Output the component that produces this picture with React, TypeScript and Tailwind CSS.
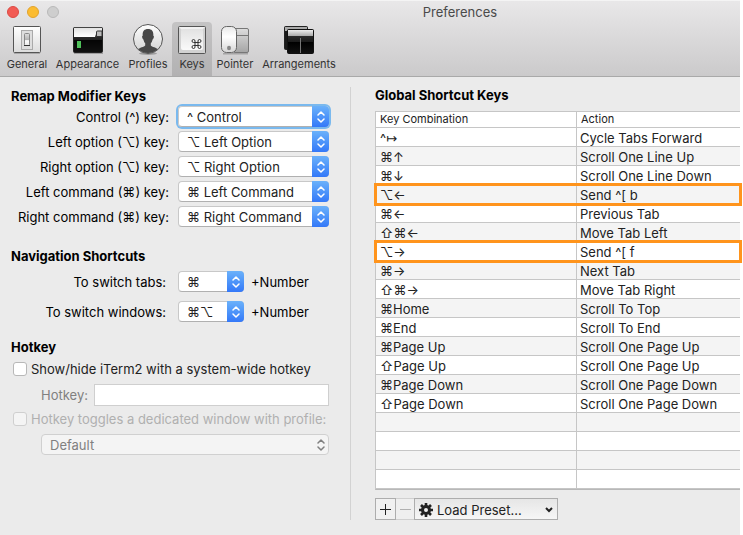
import { useState } from "react";
import type { ReactNode } from "react";

const FONT = "font-['Inter','Liberation_Sans','DejaVu_Sans',sans-serif]";

function GeneralIcon() {
  return (
    <svg width="32" height="32" viewBox="0 0 32 32" aria-hidden="true">
      <defs>
        <linearGradient id="gen" x1="0" y1="0" x2="0" y2="1">
          <stop offset="0" stopColor="#fff" />
          <stop offset="1" stopColor="#dcdcdc" />
        </linearGradient>
        <linearGradient id="knob" x1="0" y1="0" x2="0" y2="1">
          <stop offset="0" stopColor="#ddd" />
          <stop offset="0.5" stopColor="#b5b5b5" />
          <stop offset="0.6" stopColor="#fff" />
          <stop offset="1" stopColor="#e8e8e8" />
        </linearGradient>
      </defs>
      <rect x="3" y="29" width="26" height="1" fill="#000" opacity=".2" />
      <rect x="2.5" y="2.5" width="27" height="26" rx="1" fill="url(#gen)" stroke="#555" />
      <rect x="10.5" y="6.5" width="11" height="19" fill="#dedede" stroke="#aaa" />
      <rect x="13.5" y="9.5" width="5" height="12" rx="1" fill="url(#knob)" stroke="#888" />
      <path d="M13 21.5h6" stroke="#333" />
    </svg>
  );
}

function AppearanceIcon() {
  return (
    <svg width="32" height="32" viewBox="0 0 32 32" aria-hidden="true">
      <defs>
        <linearGradient id="appTop" x1="0" y1="0" x2="0" y2="1">
          <stop offset="0" stopColor="#e2e2e2" />
          <stop offset="1" stopColor="#fff" />
        </linearGradient>
        <linearGradient id="appBody" x1="0" y1="0" x2="0" y2="1">
          <stop offset="0" stopColor="#3e3e3e" />
          <stop offset="0.5" stopColor="#222" />
          <stop offset="0.52" stopColor="#050505" />
          <stop offset="1" stopColor="#111" />
        </linearGradient>
      </defs>
      <rect x="2" y="29" width="29" height="1" fill="#000" opacity=".25" />
      <rect x="1.5" y="3.5" width="29" height="25" rx="1" fill="url(#appBody)" stroke="#222" />
      <path d="M2 4h28v6h-6l-1 3H2z" fill="url(#appTop)" />
      <path d="M24.500 12.500V8q0-1 1-1H30v5.500z" fill="#bbb" stroke="#333" />
      <path d="M2 3.500h28" stroke="#444" />
      <rect x="5" y="17" width="4" height="7" fill="#4fc15a" />
    </svg>
  );
}

function ProfilesIcon() {
  return (
    <svg width="32" height="32" viewBox="0 0 32 32" aria-hidden="true">
      <defs>
        <linearGradient id="prof" x1="0" y1="0" x2="0" y2="1">
          <stop offset="0" stopColor="#fff" />
          <stop offset="1" stopColor="#d0d0d0" />
        </linearGradient>
        <clipPath id="profClip">
          <circle cx="16" cy="15" r="14" />
        </clipPath>
      </defs>
      <ellipse cx="16" cy="29.500" rx="9" ry="1.500" fill="#000" opacity=".25" />
      <circle cx="16" cy="15" r="14.500" fill="url(#prof)" stroke="#555" />
      <path
        clipPath="url(#profClip)"
        d="M16 5c-4 0-5.600 2.600-5.300 6 .1 1-.8.900-.6 2 .2 1.300.6 2 1.300 2.400.4 2 1.200 3.100 1.800 3.800v2.300c-.9 1.700-5.600 1.800-8.200 4.500V31h22v-5c-2.600-2.700-7.300-2.800-8.200-4.500v-2.300c.6-.7 1.400-1.800 1.800-3.800.7-.4 1.100-1.100 1.300-2.400.2-1.100-.7-1-.6-2C21.600 7.600 20 5 16 5z"
        fill="#484848"
      />
    </svg>
  );
}

function KeysIcon() {
  return (
    <svg width="32" height="32" viewBox="0 0 32 32" aria-hidden="true">
      <defs>
        <linearGradient id="keyFace" x1="0" y1="0" x2="0" y2="1">
          <stop offset="0" stopColor="#e2e2e2" />
          <stop offset="1" stopColor="#fafafa" />
        </linearGradient>
      </defs>
      <rect x="2.500" y="2.500" width="27" height="27" rx="1" fill="#d2d2d2" stroke="#555" />
      <path d="M3 3h26l-3 3H6z" fill="#f2f2f2" />
      <rect x="5" y="5" width="22" height="21" rx="2" fill="url(#keyFace)" />
      <path
        d="M19 18.500v-1.500a1.500 1.500 0 1 0-1.500 1.500h6a1.500 1.500 0 1 0-1.500-1.500v6a1.500 1.500 0 1 0 1.500-1.500h-6a1.500 1.500 0 1 0 1.500 1.500z"
        fill="none"
        stroke="#333"
      />
    </svg>
  );
}

function PointerIcon() {
  return (
    <svg width="32" height="32" viewBox="0 0 32 32" aria-hidden="true">
      <defs>
        <linearGradient id="mouse" x1="0" y1="0" x2="0" y2="1">
          <stop offset="0" stopColor="#e8e8e8" />
          <stop offset="0.4" stopColor="#fff" />
          <stop offset="1" stopColor="#d6d6d6" />
        </linearGradient>
        <linearGradient id="pad" x1="0" y1="0" x2="0" y2="1">
          <stop offset="0" stopColor="#ddd" />
          <stop offset="1" stopColor="#a5a5a5" />
        </linearGradient>
      </defs>
      <rect x="4" y="29" width="25" height="1.500" fill="#000" opacity=".22" />
      <rect x="14.500" y="4.500" width="15" height="24" rx="1.500" fill="url(#pad)" stroke="#777" />
      <path d="M17 11.500h12" stroke="#777" />
      <rect x="2.500" y="2.500" width="15" height="26" rx="5" fill="url(#mouse)" stroke="#666" />
      <ellipse cx="10" cy="24" rx="2" ry="2.200" fill="#888" />
    </svg>
  );
}

function ArrangementsIcon() {
  return (
    <svg width="32" height="32" viewBox="0 0 32 32" aria-hidden="true">
      <defs>
        <linearGradient id="arrBar" x1="0" y1="0" x2="0" y2="1">
          <stop offset="0" stopColor="#eee" />
          <stop offset="1" stopColor="#aaa" />
        </linearGradient>
        <linearGradient id="arrBody" x1="0" y1="0" x2="0" y2="1">
          <stop offset="0" stopColor="#3c3c3c" />
          <stop offset="0.500" stopColor="#1c1c1c" />
          <stop offset="0.520" stopColor="#000" />
          <stop offset="1" stopColor="#111" />
        </linearGradient>
      </defs>
      <rect x="1.500" y="2.500" width="23" height="23" rx="1" fill="#1a1a1a" stroke="#222" />
      <rect x="2" y="3" width="22" height="4" fill="#aaa" />
      <rect x="4.500" y="5.500" width="26" height="24" rx="1" fill="url(#arrBody)" stroke="#111" />
      <rect x="5" y="6" width="25" height="6" fill="url(#arrBar)" />
      <path d="M17.500 14v15" stroke="#777" />
    </svg>
  );
}

const tabs: { name: string; icon: ReactNode; width: string }[] = [
  { name: "General", icon: <GeneralIcon />, width: "w-12" },
  { name: "Appearance", icon: <AppearanceIcon />, width: "w-[73px]" },
  { name: "Profiles", icon: <ProfilesIcon />, width: "w-12" },
  { name: "Keys", icon: <KeysIcon />, width: "w-10" },
  { name: "Pointer", icon: <PointerIcon />, width: "w-[46px]" },
  { name: "Arrangements", icon: <ArrangementsIcon />, width: "w-[82px]" },
];

function Chevrons() {
  return (
    <svg width="8" height="12" viewBox="0 0 8 12" fill="none" stroke="currentColor" strokeWidth="1.500" strokeLinecap="round" strokeLinejoin="round" aria-hidden="true">
      <path d="M1 4l3-3 3 3M1 8l3 3 3-3" />
    </svg>
  );
}

function Popup({ id, options, width, focused = false }: { id: string; options: string[]; width: string; focused?: boolean }) {
  return (
    <div className={`relative h-[21px] rounded ${width} ${focused ? "ring-2 ring-[#7ab9ee]" : ""}`}>
      <select
        id={id}
        className="block h-full w-full appearance-none rounded border border-[#c8c8c8] border-b-[#b0b0b0] bg-white pr-5 pl-2 text-[13px] leading-[18px] text-[#222] outline-none"
      >
        {options.map((o) => (
          <option key={o}>{o}</option>
        ))}
      </select>
      <span className="pointer-events-none absolute inset-y-0 right-0 flex w-[17px] items-center justify-center rounded-r bg-linear-to-b from-[#6bb1fa] to-[#3478f8] text-white">
        <Chevrons />
      </span>
    </div>
  );
}

const modifiers = [
  { label: "Control (^) key:", value: "^ Control" },
  { label: "Left option (⌥) key:", value: "⌥ Left Option" },
  { label: "Right option (⌥) key:", value: "⌥ Right Option" },
  { label: "Left command (⌘) key:", value: "⌘ Left Command" },
  { label: "Right command (⌘) key:", value: "⌘ Right Command" },
];

const navigation = [
  { label: "To switch tabs:", value: "⌘" },
  { label: "To switch windows:", value: "⌘⌥" },
];

const shortcuts: { keys: string; action: string; marked?: boolean }[] = [
  { keys: "^↦", action: "Cycle Tabs Forward" },
  { keys: "⌘↑", action: "Scroll One Line Up" },
  { keys: "⌘↓", action: "Scroll One Line Down" },
  { keys: "⌥←", action: "Send ^[ b", marked: true },
  { keys: "⌘←", action: "Previous Tab" },
  { keys: "⇧⌘←", action: "Move Tab Left" },
  { keys: "⌥→", action: "Send ^[ f", marked: true },
  { keys: "⌘→", action: "Next Tab" },
  { keys: "⇧⌘→", action: "Move Tab Right" },
  { keys: "⌘Home", action: "Scroll To Top" },
  { keys: "⌘End", action: "Scroll To End" },
  { keys: "⌘Page Up", action: "Scroll One Page Up" },
  { keys: "⇧Page Up", action: "Scroll One Page Up" },
  { keys: "⌘Page Down", action: "Scroll One Page Down" },
  { keys: "⇧Page Down", action: "Scroll One Page Down" },
  { keys: "", action: "" },
  { keys: "", action: "" },
  { keys: "", action: "" },
  { keys: "", action: "" },
];

function Heading({ children }: { children: ReactNode }) {
  return <h2 className="text-[13px] leading-[18px] font-bold text-black">{children}</h2>;
}

export default function App() {
  const [active, setActive] = useState("Keys");
  const [hotkeyOn, setHotkeyOn] = useState(false);

  return (
    <div className={`min-h-screen bg-white pr-[3px] text-[13px] leading-[18px] text-black ${FONT}`}>
      <div className="flex min-h-screen flex-col bg-[#ebebeb]">
        <header className="border-b border-[#a9a9a9] bg-linear-to-b from-[#e9e8e9] to-[#cbcacb]">
          <div className="flex h-[22px] items-center border-t border-[#f4f4f4] pl-[7px]">
            <div className="flex gap-2">
              <button aria-label="Close" className="size-3 rounded-full border border-[#dc4a44] bg-[#f25b54]" />
              <button aria-label="Minimize" className="size-3 rounded-full border border-[#e3a32c] bg-[#fbbc31]" />
              <button aria-label="Zoom" className="size-3 rounded-full border border-[#b9b9b9] bg-[#cecece]" />
            </div>
            <h1 className="flex-1 pl-[121px] text-center text-[13px] text-[#4a4a4a]">Preferences</h1>
          </div>
          <nav className="flex pl-[3px]">
            {tabs.map((t) => (
              <button
                key={t.name}
                onClick={() => setActive(t.name)}
                className={`flex h-[54px] flex-col items-center rounded-t pt-[2px] text-[11px] leading-4 text-[#333] ${t.width} ${
                  active === t.name ? "bg-black/12" : ""
                }`}
              >
                {t.icon}
                {t.name}
              </button>
            ))}
          </nav>
        </header>

        <main className="flex flex-1">
          <section className="mt-[10px] mb-[15px] w-[351px] shrink-0 border-r border-[#d2d2d2] pr-[21px] pl-[11px]">
            <Heading>Remap Modifier Keys</Heading>
            <div className="mt-px flex flex-col gap-1">
              {modifiers.map((m, i) => (
                <div key={m.label} className="flex items-center justify-end gap-[9px]">
                  <label htmlFor={`mod-${i}`}>{m.label}</label>
                  <Popup id={`mod-${i}`} options={[m.value]} width="w-[151px]" focused={i === 0} />
                </div>
              ))}
            </div>

            <div className="mt-5">
              <Heading>Navigation Shortcuts</Heading>
            </div>
            <div className="mt-[6px] flex flex-col gap-[9px]">
              {navigation.map((n, i) => (
                <div key={n.label} className="flex items-center">
                  <label htmlFor={`nav-${i}`} className="w-[155px] text-right">
                    {n.label}
                  </label>
                  <div className="ml-3 flex items-center gap-[7px]">
                    <Popup id={`nav-${i}`} options={[n.value]} width="w-[66px]" />
                    <span>+Number</span>
                  </div>
                </div>
              ))}
            </div>

            <div className="mt-4">
              <Heading>Hotkey</Heading>
            </div>
            <label className="mt-1 flex items-center gap-1 pl-[2px] whitespace-nowrap text-[#222]">
              <input
                type="checkbox"
                checked={hotkeyOn}
                onChange={(e) => setHotkeyOn(e.target.checked)}
                className="size-[14px] appearance-none rounded-[3px] border border-[#b8b8b8] bg-white checked:bg-[#3478f8]"
              />
              Show/hide iTerm2 with a system-wide hotkey
            </label>
            <div className="mt-[6px] flex items-center pl-[30px] text-[#808080]">
              <label htmlFor="hotkey" className="w-[53px]">
                Hotkey:
              </label>
              <input id="hotkey" type="text" className="h-[22px] min-w-0 flex-1 border border-[#cfcfcf] bg-white px-1 outline-none" />
            </div>
            <label className="mt-1 flex items-center gap-1 pl-[2px] whitespace-nowrap text-[#b0b0b0]">
              <input type="checkbox" disabled className="size-[14px] appearance-none rounded-[3px] border border-[#cfcfcf] bg-[#f4f4f4]" />
              Hotkey toggles a dedicated window with profile:
            </label>
            <div className="relative mt-[6px] ml-[30px] text-[#808080]">
              <select
                aria-label="Profile"
                disabled
                className="block h-[21px] w-full appearance-none rounded border border-[#d0d0d0] bg-[#f4f4f4] pl-2 text-[13px] leading-[18px] opacity-100"
              >
                <option>Default</option>
              </select>
              <span className="pointer-events-none absolute inset-y-0 right-0 flex w-[17px] items-center justify-center">
                <Chevrons />
              </span>
            </div>
          </section>

          <section className="min-w-0 flex-1 pt-[9px] pl-6">
            <Heading>Global Shortcut Keys</Heading>
            <table className="mt-[7px] w-full table-fixed border-separate border-spacing-0 border-t border-b border-l border-[#c6c6c6] border-b-[#b8b8b8] text-left">
              <thead>
                <tr className="bg-white text-[11px] leading-[15px] text-[#222]">
                  <th className="h-4 w-[201px] border-r border-b border-[#c6c6c6] p-0 pl-1 font-normal">Key Combination</th>
                  <th className="h-4 border-b border-[#c6c6c6] p-0 pl-1 font-normal">Action</th>
                </tr>
              </thead>
              <tbody className="leading-4 text-[#222]">
                {shortcuts.map((s, i) => (
                  <tr key={i} className="relative h-[19px] bg-white even:bg-[#f4f4f4]">
                    <td className="h-[19px] border-r border-b border-[#c6c6c6] p-0 pt-[2px] pl-1">
                      {s.keys}
                      {s.marked && <span className="pointer-events-none absolute -top-[2px] -right-[2px] -bottom-[2px] -left-[2px] z-10 border-3 border-[#ff941c]" />}
                    </td>
                    <td className="border-b border-[#c6c6c6] p-0 pt-[2px] pl-[3px]">{s.action}</td>
                  </tr>
                ))}
              </tbody>
            </table>
            <div className="mt-2 flex h-[22px]">
              <button aria-label="Add" className="flex w-[21px] items-center justify-center border border-[#adadad] bg-[#f1f1f1] text-[#222]">
                <svg width="11" height="11" viewBox="0 0 11 11" stroke="currentColor" aria-hidden="true">
                  <path d="M5.500 0v11M0 5.500h11" />
                </svg>
              </button>
              <button aria-label="Remove" disabled className="flex w-[18px] items-center justify-center border-y border-[#d0d0d0] bg-[#efefef] text-[#b0b0b0]">
                <svg width="11" height="11" viewBox="0 0 11 11" stroke="currentColor" aria-hidden="true">
                  <path d="M0 5.500h11" />
                </svg>
              </button>
              <button className="flex w-36 items-center border border-[#adadad] bg-linear-to-b from-[#e6e6e6] to-[#f6f6f6] pt-px pr-1 pl-1 text-[#222]">
                <svg width="14" height="14" viewBox="-7 -7 14 14" aria-hidden="true" fill="none" stroke="#222">
                  <circle r="3.500" strokeWidth="3" />
                  <path d="M0-7v3M0 7V4M-7 0h3M7 0H4M-5-5l2 2M5 5L3 3M5-5L3-3M-5 5l2-2" strokeWidth="2.600" />
                </svg>
                <span className="flex-1 pl-1 text-left">Load Preset...</span>
                <svg width="8" height="6" viewBox="0 0 8 6" fill="none" stroke="#222" strokeWidth="2" aria-hidden="true">
                  <path d="M1 1l3 3 3-3" />
                </svg>
              </button>
            </div>
          </section>
        </main>
      </div>
    </div>
  );
}
